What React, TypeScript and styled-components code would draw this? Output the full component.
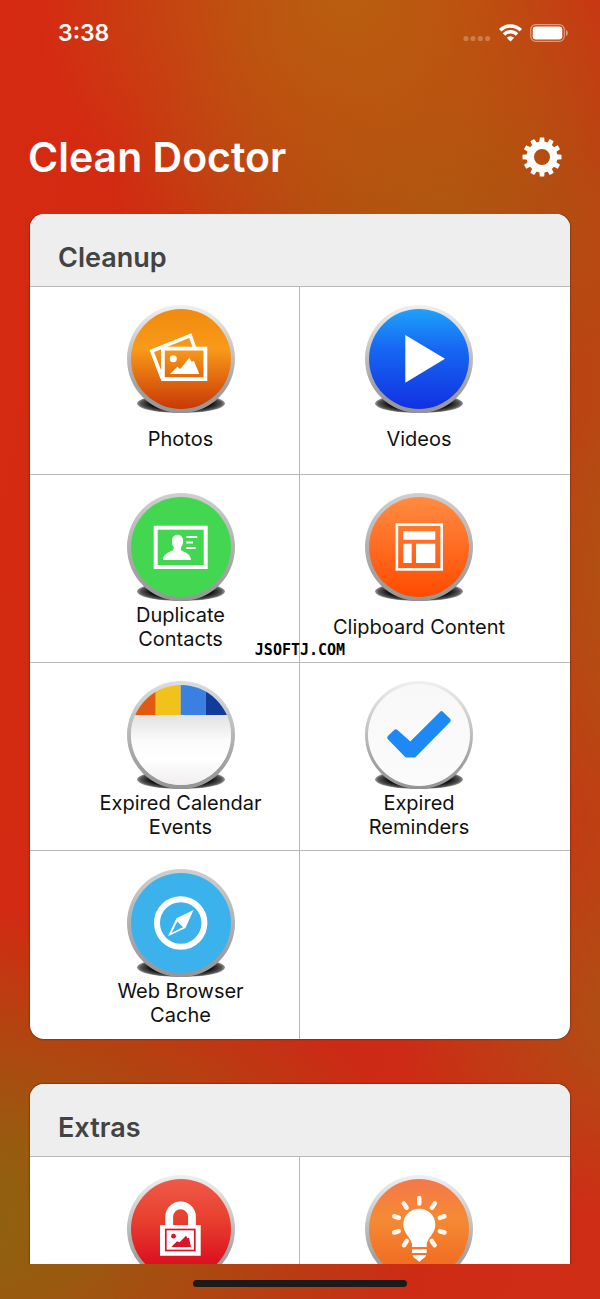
import React from "react";
import styled, { createGlobalStyle } from "styled-components";

const GlobalStyle = createGlobalStyle`
  * { box-sizing: border-box; }
  body {
    margin: 0;
    font-family: Inter, "Liberation Sans", sans-serif;
    -webkit-font-smoothing: antialiased;
  }
`;

const Screen = styled.div`
  position: relative;
  display: flex;
  flex-direction: column;
  height: 100vh;
  overflow: hidden;
  color: #fff;
  background:
    radial-gradient(ellipse 78% 24% at -8% 94%, #8c640f 0%, rgba(143, 98, 15, 0.85) 30%, rgba(150, 90, 15, 0) 100%),
    radial-gradient(ellipse 52% 20% at 58% 0%, #b95e0f 0%, rgba(185, 92, 15, 0.8) 35%, rgba(187, 90, 15, 0) 100%),
    radial-gradient(ellipse 56% 18% at 74% 16%, #ac5610 0%, rgba(174, 84, 16, 0.8) 35%, rgba(174, 80, 16, 0) 100%),
    radial-gradient(ellipse 34% 34% at 108% 44%, #a95a12 0%, rgba(169, 90, 18, 0) 100%),
    radial-gradient(ellipse 42% 16% at 108% 78%, #aa5414 0%, rgba(173, 82, 20, 0) 100%),
    linear-gradient(100deg, #d62a12 0%, #cc2a14 60%, #cf2d15 100%);
`;

const StatusBar = styled.div`
  display: flex;
  flex: none;
  align-items: center;
  justify-content: space-between;
  height: 66px;
  padding: 0 31px 0 58px;
`;

const Clock = styled.time`
  font-size: 23px;
  font-weight: 600;
  line-height: 28px;
`;

const StatusIcons = styled.div`
  display: flex;
  align-items: center;
  gap: 8px;
`;

const TitleBar = styled.header`
  display: flex;
  flex: none;
  align-items: center;
  justify-content: space-between;
  height: 148px;
  padding: 34px 38px 0 28px;
`;

const Title = styled.h1`
  margin: 0;
  font-size: 41px;
  font-weight: 600;
  line-height: 52px;
`;

const SettingsButton = styled.button`
  display: flex;
  padding: 0;
  border: 0;
  background: none;
  color: #fff;
`;

const Content = styled.main`
  display: flex;
  flex: 1;
  flex-direction: column;
  gap: 45px;
  min-height: 0;
  padding: 0 30px;
  overflow-y: auto;
  scrollbar-width: none;
`;

const Card = styled.section`
  flex: none;
  overflow: hidden;
  border-radius: 14px;
  background: #fff;
  box-shadow: 0 0 2px rgba(0, 0, 0, 0.7);
`;

const CardTitle = styled.h2`
  margin: 0;
  height: 73px;
  padding: 27px 28px 0;
  border-bottom: 1px solid #b9b9b9;
  background: #eeeeee;
  color: #434343;
  font-size: 27px;
  font-weight: 600;
  line-height: 34px;
`;

const Grid = styled.div`
  display: grid;
  grid-template-columns: 1fr 1fr;
`;

const Tile = styled.button<{ $last?: boolean }>`
  display: flex;
  flex-direction: column;
  align-items: center;
  height: 188px;
  padding: 18px 0 0 32px;
  border: 0 solid #b9b9b9;
  border-bottom-width: ${(p) => (p.$last ? 0 : 1)}px;
  background: none;
  color: #111;
  font: inherit;

  &:nth-child(odd) {
    border-right-width: 1px;
  }
  &:nth-child(even) {
    padding: 18px 32px 0 0;
  }
`;

const TileLabel = styled.span`
  display: flex;
  align-items: center;
  justify-content: center;
  max-width: 180px;
  height: 48px;
  font-size: 20px;
  line-height: 24px;
  text-align: center;
`;

const BottomBar = styled.footer`
  display: flex;
  flex: none;
  justify-content: center;
  height: 35px;
  padding-top: 16px;
`;

const HomeIndicator = styled.div`
  width: 214px;
  height: 7px;
  border-radius: 4px;
  background: #1d1b1a;
`;

const Watermark = styled.span`
  position: absolute;
  top: 50%;
  left: 50%;
  transform: translate(-50%, -50%);
  color: #000;
  font-family: "DejaVu Sans Mono", monospace;
  font-size: 15px;
  font-weight: 700;
  line-height: 16px;
  pointer-events: none;
`;

interface BadgeProps {
  id: string;
  top: string;
  middle?: string;
  bottom: string;
  rim?: string;
  radius?: number;
  children: React.ReactNode;
}

function Badge({ id, top, middle, bottom, rim = "#f0f0f0", radius = 50, children }: BadgeProps) {
  return (
    <svg width="108" height="110" viewBox="0 0 108 110" aria-hidden="true">
      <defs>
        <linearGradient id={`${id}-fill`} x1="0" y1="0" x2="0" y2="1">
          <stop offset="0" stopColor={top} />
          {middle && <stop offset="0.4" stopColor={middle} />}
          <stop offset="1" stopColor={bottom} />
        </linearGradient>
        <linearGradient id={`${id}-rim`} x1="0" y1="0" x2="0" y2="1">
          <stop offset="0" stopColor={rim} />
          <stop offset="0.75" stopColor="#a2a2a2" />
          <stop offset="1" stopColor="#959595" />
        </linearGradient>
        <radialGradient id={`${id}-shade`}>
          <stop offset="0.7" stopColor="#111" />
          <stop offset="0.92" stopColor="#555" />
          <stop offset="1" stopColor="#999" />
        </radialGradient>
        <clipPath id={`${id}-clip`}>
          <circle cx="54" cy="54" r={radius} />
        </clipPath>
      </defs>
      <ellipse cx="54" cy="98.500" rx="44" ry="9.500" fill={`url(#${id}-shade)`} />
      <circle cx="54" cy="54" r="54" fill={`url(#${id}-rim)`} />
      <circle cx="54" cy="54" r={radius} fill={`url(#${id}-fill)`} />
      <g clipPath={`url(#${id}-clip)`}>{children}</g>
    </svg>
  );
}

const PhotosIcon = () => (
  <Badge id="photos" top="#f08a10" middle="#f99a18" bottom="#c93806">
    <path d="M35.300 73.500 24.800 46.100 63.300 30.600 67.500 42.500" fill="none" stroke="#fff" strokeWidth="3.600" />
    <rect x="35.900" y="43.600" width="42.500" height="30.500" fill="none" stroke="#fff" strokeWidth="3.800" />
    <circle cx="46.300" cy="53.700" r="3.500" fill="#fff" />
    <path d="M43 69l7.300-7.300 3 2.300 9-11.300 2.400 4 2.300-.7 5.300 13z" fill="#fff" />
  </Badge>
);

const VideosIcon = () => (
  <Badge id="videos" top="#1ea2fa" middle="#1667f2" bottom="#1230e2">
    <path d="M40.300 30 80 53.700 40.300 77.700z" fill="#fff" />
  </Badge>
);

const ContactsIcon = () => (
  <Badge id="contacts" top="#43d650" bottom="#43d650" rim="#cfcfcf">
    <rect x="28.700" y="34.700" width="50" height="39.300" fill="none" stroke="#fff" strokeWidth="4" />
    <path
      d="M50.700 41.700c3.500 0 5.400 2.700 5.400 6 0 3.400-1 5.400-2.200 6.800v2.300c1 2.400 9.900 2.400 10.100 10.200H36c.2-7.800 9-7.800 10.100-10.200l.8-2.300c-1.200-1.400-2-3.400-2-6.800 0-3.300 2.300-6 5.800-6z"
      fill="#fff"
    />
    <path d="M59.300 44h11M59.300 49.500H66M59.300 55h9.400" stroke="#fff" strokeWidth="2" />
  </Badge>
);

const ClipboardIcon = () => (
  <Badge id="clipboard" top="#ff8c42" bottom="#ff4b00" rim="#cfcfcf">
    <rect x="31.900" y="31.600" width="44.800" height="44.800" fill="none" stroke="#fff" strokeWidth="2.600" />
    <path d="M38.300 38.300h32v8.400h-32zM38.300 50.700h8.400V70h-8.400zM51 50.700h19.300V70H51z" fill="#fff" />
  </Badge>
);

const CalendarIcon = () => (
  <Badge id="calendar" top="#e0e0e0" middle="#e4e4e4" bottom="#f0edef" rim="#dcdedd">
    <defs>
      <linearGradient id="calendar-page" x1="0" y1="0" x2="0" y2="1">
        <stop offset="0" stopColor="#e2e2e2" />
        <stop offset="0.35" stopColor="#fbfbfb" />
        <stop offset="0.6" stopColor="#fff" />
        <stop offset="1" stopColor="#eeebed" />
      </linearGradient>
    </defs>
    <path d="M0 34h108v74H0z" fill="url(#calendar-page)" />
    <path d="M0 0h28.700v34H0z" fill="#e05a10" />
    <path d="M28.700 0h25v34h-25z" fill="#f2c21c" />
    <path d="M53.700 0h25v34h-25z" fill="#3a80e0" />
    <path d="M78.700 0H108v34H78.700z" fill="#123b9a" />
  </Badge>
);

const RemindersIcon = () => (
  <Badge id="reminders" top="#f8f8f8" bottom="#fbfbfb" radius={51}>
    <path
      d="M24.500 56.700 30.700 50.500 45.300 63.500 76.500 32.500 83.500 39.300 49 74.300H41.500z"
      fill="#1e88f5"
      stroke="#1e88f5"
      strokeWidth="4.500"
      strokeLinejoin="round"
    />
  </Badge>
);

const BrowserIcon = () => (
  <Badge id="browser" top="#3cb2ec" bottom="#3cb2ec" rim="#cfcfcf">
    <circle cx="53.700" cy="54" r="23.700" fill="none" stroke="#fff" strokeWidth="6" />
    <path
      fillRule="evenodd"
      d="M66.500 41 49.500 49.300 41 67.300 58.500 59zM50.300 52.500 48.900 55.300 44.700 63.900 53.300 59.600 56 58.200z"
      fill="#fff"
    />
  </Badge>
);

const LockIcon = () => (
  <Badge id="lock" top="#f05a48" middle="#e8402f" bottom="#d8001c">
    <path d="M42.200 54V41.700a11.400 11.400 0 0 1 22.800 0V54" fill="none" stroke="#fff" strokeWidth="7.800" />
    <path d="M33 50h40.700v30.700H33z" fill="#fff" />
    <rect x="38.800" y="54.500" width="29" height="21" fill="none" stroke="#dc1428" strokeWidth="1.700" />
    <circle cx="46.500" cy="61.200" r="2.400" fill="#dc1428" />
    <path d="M44.300 72l5.700-5.700 2.500 1L59 60.700l1.500 2.600 1.500-.6L64 72z" fill="#dc1428" />
  </Badge>
);

const BulbIcon = () => (
  <Badge id="bulb" top="#f4784a" middle="#f58a34" bottom="#f0641c">
    <path
      d="M54.300 33.700c9.200 0 16 6.800 16 16 0 8.300-7.500 13-8.600 19.300V72H47v-3c-1.200-6.300-8.700-11-8.700-19.300 0-9.200 6.800-16 16-16z"
      fill="#fff"
    />
    <path d="M47 74.300h14.700V78H47zM47.500 80h13.700c-.3 2-2.200 3-3.700 4l-3.200 2.700L51 84c-1.500-1-3.200-2-3.500-4z" fill="#fff" />
    <path
      d="M54.300 23v5.500M38.800 28.500l2.800 4.200M69.800 28.500 67 32.700M29.200 41.300l4.500 1.500M79.400 41.300l-4.500 1.500M29.200 57.500l4.500-1.300M79.400 57.500l-4.500-1.300M39 70.200l2.800-4.200M69.600 70.200 66.800 66"
      stroke="#fff5ec"
      strokeWidth="4.600"
      strokeLinecap="round"
    />
  </Badge>
);

const GearIcon = () => (
  <svg width="40" height="40" viewBox="-20 -20 40 40" aria-hidden="true">
    <circle r="11.700" fill="none" stroke="currentColor" strokeWidth="7.400" />
    {Array.from({ length: 12 }, (_, i) => (
      <path key={i} d="M-2.700-14-2.200-19.500H2.200L2.700-14z" fill="currentColor" transform={`rotate(${i * 30})`} />
    ))}
  </svg>
);

const SignalIcon = () => (
  <svg width="28" height="20" viewBox="0 0 28 20" aria-hidden="true">
    {[3, 10, 17.3, 24.600].map((x) => (
      <circle key={x} cx={x} cy="15.500" r="2.600" fill="#fff" opacity="0.25" />
    ))}
  </svg>
);

const WifiIcon = () => (
  <svg width="23" height="18" viewBox="0 0 23 18" aria-hidden="true">
    <g fill="none" stroke="#fff" strokeWidth="3.500">
      <path d="M1.200 6.200a14.700 14.700 0 0 1 20.600 0" />
      <path d="M5 10.400a9.300 9.300 0 0 1 13 0" />
    </g>
    <path d="M7.800 13.700a5.300 5.300 0 0 1 7.400 0L11.500 17.500z" fill="#fff" />
  </svg>
);

const BatteryIcon = () => (
  <svg width="39" height="18" viewBox="0 0 39 18" aria-hidden="true">
    <rect x="0.700" y="0.700" width="33.600" height="16.600" rx="5" fill="none" stroke="#fff" strokeWidth="1.300" opacity="0.45" />
    <rect x="2.700" y="2.500" width="29.600" height="13" rx="3.200" fill="#fff" />
    <path d="M36 6c2.400.8 2.400 5.200 0 6z" fill="#fff" opacity="0.5" />
  </svg>
);

interface TileData {
  lines: string[];
  Icon: React.ComponentType;
}

const cleanupTiles: TileData[] = [
  { lines: ["Photos"], Icon: PhotosIcon },
  { lines: ["Videos"], Icon: VideosIcon },
  { lines: ["Duplicate", "Contacts"], Icon: ContactsIcon },
  { lines: ["Clipboard Content"], Icon: ClipboardIcon },
  { lines: ["Expired Calendar", "Events"], Icon: CalendarIcon },
  { lines: ["Expired", "Reminders"], Icon: RemindersIcon },
  { lines: ["Web Browser", "Cache"], Icon: BrowserIcon },
];

function Label({ lines }: { lines: string[] }) {
  return (
    <TileLabel>
      <span>
        {lines.map((line, i) => (
          <React.Fragment key={line}>
            {i > 0 && <br />}
            {line}
          </React.Fragment>
        ))}
      </span>
    </TileLabel>
  );
}

export default function App() {
  return (
    <>
      <GlobalStyle />
      <Screen>
        <StatusBar>
          <Clock>3:38</Clock>
          <StatusIcons>
            <SignalIcon />
            <WifiIcon />
            <BatteryIcon />
          </StatusIcons>
        </StatusBar>
        <TitleBar>
          <Title>Clean Doctor</Title>
          <SettingsButton type="button" aria-label="Settings">
            <GearIcon />
          </SettingsButton>
        </TitleBar>
        <Content>
          <Card>
            <CardTitle>Cleanup</CardTitle>
            <Grid>
              {cleanupTiles.map(({ lines, Icon }, i) => (
                <Tile key={lines.join(" ")} type="button" $last={i === cleanupTiles.length - 1}>
                  <Icon />
                  <Label lines={lines} />
                </Tile>
              ))}
            </Grid>
          </Card>
          <Card>
            <CardTitle>Extras</CardTitle>
            <Grid>
              <Tile type="button" $last aria-label="Private photos">
                <LockIcon />
              </Tile>
              <Tile type="button" $last aria-label="Tips">
                <BulbIcon />
              </Tile>
            </Grid>
          </Card>
        </Content>
        <BottomBar>
          <HomeIndicator />
        </BottomBar>
        <Watermark>JSOFTJ.COM</Watermark>
      </Screen>
    </>
  );
}
